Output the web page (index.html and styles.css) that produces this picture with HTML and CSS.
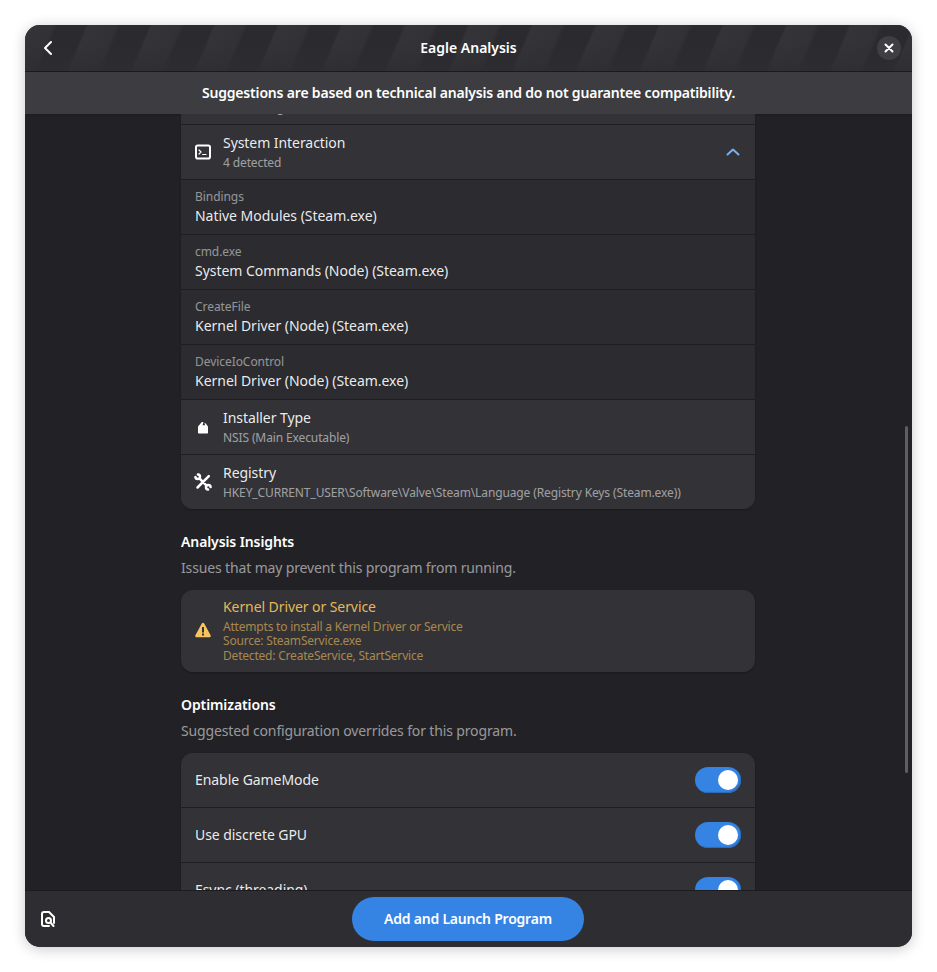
FILE: index.html
```html
<!DOCTYPE html>
<html lang="en">
<head>
<meta charset="utf-8">
<title>Eagle Analysis</title>
<link rel="stylesheet" href="styles.css">
</head>
<body>
<div class="window">
  <header class="header">
    <button class="back" aria-label="Back">
      <svg width="16" height="16" viewBox="0 0 16 16"><path class="stroke-2" d="M11 2 5 8l6 6"/></svg>
    </button>
    <h1 class="title">Eagle Analysis</h1>
    <button class="close" aria-label="Close">
      <svg width="10" height="10" viewBox="0 0 10 10"><path class="stroke-2" d="m1.500 1.500 7 7m0-7-7 7"/></svg>
    </button>
  </header>
  <div class="banner">Suggestions are based on technical analysis and do not guarantee compatibility.</div>
  <main class="main">
    <div class="scroll">
      <section class="card">
        <div class="row row-icon">
          <span class="icon"></span>
          <div class="text"><div class="row-title">Scheduled Tasks</div><div class="row-sub">2 recurring</div></div>
        </div>
        <div class="row row-icon">
          <svg class="icon" width="16" height="16" viewBox="0 0 16 16"><rect class="stroke-box" x="1" y="1.500" width="14" height="13" rx="1.800"/><path class="stroke-1" d="m4 6 2 2-2 2M7.500 10.500H11"/></svg>
          <div class="text"><div class="row-title">System Interaction</div><div class="row-sub">4 detected</div></div>
          <svg class="chevron" width="14" height="14" viewBox="0 0 14 14"><path class="stroke-accent" d="m1.500 9.500 5.500-5 5.500 5"/></svg>
        </div>
        <div class="row row-data"><div class="data-label">Bindings</div><div class="data-value">Native Modules (Steam.exe)</div></div>
        <div class="row row-data"><div class="data-label">cmd.exe</div><div class="data-value">System Commands (Node) (Steam.exe)</div></div>
        <div class="row row-data"><div class="data-label">CreateFile</div><div class="data-value">Kernel Driver (Node) (Steam.exe)</div></div>
        <div class="row row-data"><div class="data-label">DeviceIoControl</div><div class="data-value">Kernel Driver (Node) (Steam.exe)</div></div>
        <div class="row row-icon">
          <svg class="icon" width="16" height="16" viewBox="0 0 16 16"><path class="fill" d="M3 7.500 6.800 3h1.700l-1 3.300h2.800L9.300 4.300h1.200L13 7.500v6.200c0 .4-.3.800-.8.800H3.800c-.5 0-.8-.4-.8-.8z"/></svg>
          <div class="text"><div class="row-title">Installer Type</div><div class="row-sub">NSIS (Main Executable)</div></div>
        </div>
        <div class="row row-icon">
          <svg class="icon icon-over" width="16" height="16" viewBox="0 0 16 16"><path class="stroke-tool" d="M.4 2.900A2.300 2.300 0 1 0 2.900 .4M15.600 13.100A2.300 2.300 0 1 0 13.100 15.600M4.700 4.700l6.600 6.600M2.500 13.500 13.800 2.200"/></svg>
          <div class="text"><div class="row-title">Registry</div><div class="row-sub">HKEY_CURRENT_USER\Software\Valve\Steam\Language (Registry Keys (Steam.exe))</div></div>
        </div>
      </section>

      <h2 class="section-title insights-title">Analysis Insights</h2>
      <p class="section-desc">Issues that may prevent this program from running.</p>
      <section class="card warn">
        <svg class="icon" width="16" height="16" viewBox="0 0 16 16"><path class="warn-fill" d="M8 .8c-.5 0-.9.3-1.200.7L.4 13.200c-.5 1 .2 2.100 1.300 2.100h12.600c1.100 0 1.800-1.100 1.300-2.100L9.200 1.500C8.900 1.100 8.500.8 8 .8zM7 5h2v5.500H7zM7 11.500h2v2H7z"/></svg>
        <div class="text">
          <div class="warn-title">Kernel Driver or Service</div>
          <div class="warn-body">Attempts to install a Kernel Driver or Service<br>Source: SteamService.exe<br>Detected: CreateService, StartService</div>
        </div>
      </section>

      <h2 class="section-title opt-title">Optimizations</h2>
      <p class="section-desc">Suggested configuration overrides for this program.</p>
      <section class="card">
        <div class="row row-switch"><span class="row-title">Enable GameMode</span><span class="switch"><span class="knob"></span></span></div>
        <div class="row row-switch"><span class="row-title">Use discrete GPU</span><span class="switch"><span class="knob"></span></span></div>
        <div class="row row-switch"><span class="row-title">Esync (threading)</span><span class="switch"><span class="knob"></span></span></div>
      </section>
    </div>
    <div class="scrollbar"></div>
  </main>
  <footer class="footer">
    <svg class="doc-icon" width="16" height="16" viewBox="0 0 16 16"><path class="stroke-doc" d="M9 15H4A2 2 0 0 1 2 13V3A2 2 0 0 1 4 1H9l5 5v6"/><circle class="stroke-doc" cx="8.500" cy="9.500" r="2.500"/><path class="stroke-doc" d="m10.500 11.500 3 3.500"/></svg>
    <button class="launch">Add and Launch Program</button>
  </footer>
</div>
</body>
</html>
```

FILE: styles.css
```css
* { box-sizing: border-box; }
html, body { margin: 0; height: 100%; }
body {
  background: #fff;
  font-family: "Noto Sans", "Liberation Sans", sans-serif;
  color: #fff;
  padding: 25px;
  overflow: hidden;
}
button { font: inherit; color: inherit; border: 0; padding: 0; background: none; }
svg { display: block; fill: none; }

.stroke-2, .stroke-1, .stroke-box, .stroke-accent, .stroke-doc, .stroke-tool { stroke: #fff; stroke-linecap: round; stroke-linejoin: round; }
.stroke-2 { stroke-width: 2; }
.stroke-1 { stroke-width: 1.200; }
.stroke-box { stroke-width: 2; }
.stroke-doc { stroke-width: 2; }
.stroke-tool { stroke-width: 2.500; }
.stroke-accent { stroke: #78aeed; stroke-width: 2; }
.fill { fill: #fff; }
.warn-fill { fill: #f8c45e; fill-rule: evenodd; }
.icon-over { overflow: visible; }

.window {
  width: 887px;
  height: 922px;
  border-radius: 15px;
  overflow: hidden;
  background: #222226;
  display: flex;
  flex-direction: column;
  box-shadow: 0 2px 14px rgba(0, 0, 0, .22);
}

.header {
  flex: none;
  height: 47px;
  display: flex;
  align-items: center;
  justify-content: space-between;
  padding: 0 11px 1px 15px;
  border-bottom: 1px solid #1c1c1f;
  background:
    linear-gradient(180deg, rgba(46, 46, 50, 0) 40%, rgba(46, 46, 50, .75) 100%),
    repeating-linear-gradient(113deg, #343438 0, #323236 26px, #2b2b2f 30px, #2b2b2f 56px, #343438 58.500px);
}
.back { width: 20px; height: 16px; }
.title { margin: 0; font-size: 14px; font-weight: 600; line-height: 20px; }
.close {
  width: 24px;
  height: 24px;
  border-radius: 50%;
  background: #3f3f43;
  display: flex;
  align-items: center;
  justify-content: center;
}

.banner {
  flex: none;
  height: 42px;
  background: #3d3d41;
  display: flex;
  align-items: center;
  justify-content: center;
  padding-bottom: 2px;
  font-size: 14px;
  font-weight: 600;
  letter-spacing: -.18px;
  box-shadow: 0 1px 2px rgba(0, 0, 0, .15);
  position: relative;
}

.main {
  flex: 1;
  min-height: 0;
  overflow: hidden;
  position: relative;
}
.scroll {
  width: 574px;
  margin: -44px 0 0 156px;
}
.scrollbar {
  position: absolute;
  top: 312px;
  right: 4px;
  width: 3px;
  height: 347px;
  border-radius: 2px;
  background: #5e5e62;
}

.card {
  background: #2e2e32;
  border-radius: 12px;
  overflow: hidden;
  box-shadow: 0 1px 2px rgba(0, 0, 0, .25);
}
.row {
  height: 55px;
  border-bottom: 1px solid #1e1e21;
  display: flex;
}
.row:last-child { height: 54px; border-bottom: 0; }
.row-icon {
  background: #333337;
  align-items: center;
  padding: 0 14px;
  gap: 12px;
}
.row-data {
  background: #2c2c30;
  flex-direction: column;
  justify-content: center;
  padding: 0 14px;
}
.row-switch {
  background: #333337;
  align-items: center;
  justify-content: space-between;
  padding: 0 14px;
}
.icon { flex: none; width: 16px; height: 16px; }
.chevron { margin-left: auto; margin-right: 1px; }
.text { min-width: 0; }
.row-icon .text { padding-top: 1px; }
.row-title { font-size: 14px; line-height: 20px; letter-spacing: -.06px; color: rgba(255, 255, 255, .92); }
.row-sub { font-size: 12px; line-height: 18px; margin-top: 1px; letter-spacing: -.12px; color: rgba(255, 255, 255, .55); }
.data-label { font-size: 12px; line-height: 18px; letter-spacing: -.06px; color: rgba(255, 255, 255, .5); }
.data-value { font-size: 14px; line-height: 20px; letter-spacing: -.03px; color: rgba(255, 255, 255, .92); }

.section-title { margin: 0; font-size: 14px; font-weight: 600; line-height: 20px; letter-spacing: -.1px; }
.insights-title { margin-top: 23px; }
.opt-title { margin-top: 23px; }
.section-desc {
  margin: 6px 0 12px;
  font-size: 14px;
  line-height: 20px;
  letter-spacing: -.14px;
  color: rgba(255, 255, 255, .55);
}

.warn {
  height: 82px;
  background: #333337;
  display: flex;
  align-items: center;
  padding: 0 14px 2px;
  gap: 12px;
}
.warn-title { font-size: 14px; line-height: 20px; letter-spacing: -.08px; color: rgba(248, 196, 94, .93); }
.warn-body { font-size: 12px; line-height: 14.500px; letter-spacing: -.2px; color: rgba(248, 196, 94, .6); margin-top: 3.400px; }

.switch {
  width: 46px;
  height: 26px;
  border-radius: 13px;
  background: #3584e4;
  display: flex;
  justify-content: flex-end;
  align-items: center;
  padding: 0 3px;
  box-shadow: inset -1px -1px 1px #2a69b8;
}
.knob { width: 20px; height: 20px; border-radius: 50%; background: #fff; }

.footer {
  flex: none;
  height: 57px;
  background: #2e2e32;
  border-top: 1px solid #1c1c1f;
  display: flex;
  align-items: center;
  justify-content: center;
  position: relative;
}
.doc-icon { position: absolute; left: 15px; top: 20px; }
.launch {
  width: 232px;
  height: 44px;
  padding-bottom: 2px;
  margin-left: -1px;
  border-radius: 22px;
  background: #3584e4;
  font-size: 14px;
  font-weight: 600;
  letter-spacing: -.22px;
}
```
